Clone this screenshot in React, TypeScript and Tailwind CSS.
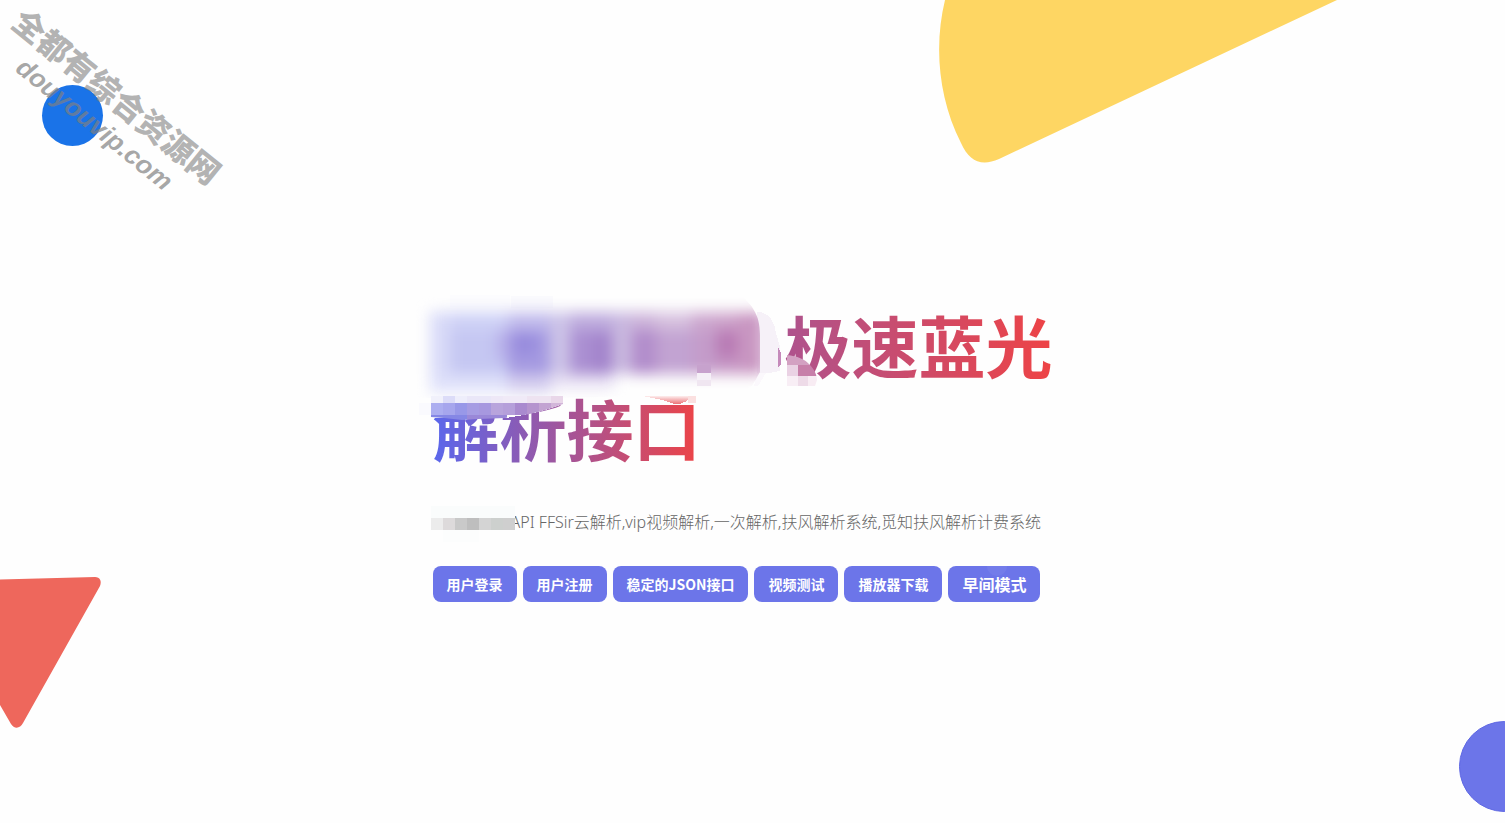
import React from 'react';

const links = [
  { label: '用户登录', href: '#login' },
  { label: '用户注册', href: '#register' },
  { label: '稳定的JSON接口', href: '#api' },
  { label: '视频测试', href: '#test' },
  { label: '播放器下载', href: '#download' },
];

// [x, y, width, height, fill]
type Cell = [number, number, number, number, string];

const softCells: Cell[] = [
  [430, 312, 22, 62, '#d9dbf8'],
  [450, 312, 60, 20, '#cfd2f6'],
  [450, 330, 60, 44, '#c5c7f2'],
  [496, 330, 14, 30, '#b9b2ea'],
  [508, 312, 44, 20, '#c2bcec'],
  [508, 330, 44, 44, '#a59ae1'],
  [514, 334, 22, 20, '#978bdd'],
  [550, 312, 22, 62, '#cdc4e8'],
  [570, 312, 44, 20, '#bfadde'],
  [570, 330, 44, 44, '#ab90d2'],
  [592, 334, 22, 38, '#a384cc'],
  [612, 312, 22, 62, '#c9b8df'],
  [632, 312, 26, 20, '#cdb4da'],
  [632, 330, 26, 44, '#b28dcb'],
  [656, 312, 38, 20, '#d6c0de'],
  [656, 330, 38, 44, '#c2a3d2'],
  [692, 312, 26, 20, '#cda8cf'],
  [692, 330, 26, 44, '#c49cca'],
  [716, 312, 24, 20, '#cda3ca'],
  [716, 330, 24, 30, '#b97bb5'],
  [716, 358, 24, 16, '#c799c6'],
  [738, 312, 26, 62, '#c997c2'],
  [430, 374, 80, 18, '#dfe1fa'],
  [508, 374, 44, 18, '#d3ccee'],
  [550, 374, 64, 14, '#e7e0f3'],
];

const hardCells: Cell[] = [
  [697, 365, 14, 8, '#c7a2cd'],
  [697, 373, 14, 7, '#f5f0f7'],
  [697, 380, 14, 6, '#f0e6f1'],
  [419, 403, 12, 12, '#fafafe'],
  [431, 396, 12, 7, '#f1f1fb'],
  [443, 396, 12, 7, '#dcdcf8'],
  [455, 396, 12, 7, '#eeeefb'],
  [467, 396, 24, 7, '#eae7f8'],
  [491, 396, 12, 7, '#eee8f7'],
  [503, 396, 24, 7, '#f0eaf7'],
  [527, 396, 24, 7, '#eee3f1'],
  [551, 396, 12, 7, '#e9d7e9'],
];

const stripColors = [
  '#acaef0', '#a6a6ed', '#9898e8', '#a69ce3', '#a798df', '#b8a4dc',
  '#b59fda', '#a98acf', '#b594ce', '#c3a3d2', '#d2b6d9',
];

const noteColors = ['#ececec', '#dddadb', '#c9c9c9', '#bebebe', '#d4d4d4', '#cdd0ce', '#cfcfcf'];

function Cells({ cells }: { cells: Cell[] }) {
  return (
    <>
      {cells.map(([x, y, w, h, fill]) => (
        <rect key={`${x}-${y}`} x={x} y={y} width={w} height={h} fill={fill} />
      ))}
    </>
  );
}

// Censored brand name over the heading
function TitleMask() {
  return (
    <svg
      className="pointer-events-none absolute -left-[25px] -top-3 h-[140px] w-[420px]"
      viewBox="408 290 420 140"
      shapeRendering="crispEdges"
      aria-hidden="true"
    >
      <defs>
        <filter id="soft" x="-10%" y="-30%" width="120%" height="160%" colorInterpolationFilters="sRGB">
          <feGaussianBlur stdDeviation="7" />
        </filter>
        <linearGradient id="blush" x1="0" y1="0" x2="0" y2="1">
          <stop offset="0" stopColor="#fdeeee" />
          <stop offset="1" stopColor="#ec7377" />
        </linearGradient>
        <clipPath id="block">
          <path d="M408 290H735C752 304 760 314 760 335V372L752 386L735 396H640L560 398H408Z" />
        </clipPath>
        <clipPath id="strip">
          <path d="M431 403H563V404C545 411 528 415 505 418L478 419L462 420L444 418L431 417Z" />
        </clipPath>
        <clipPath id="edge">
          <path d="M787 355C797 356 805 359 810 365C815 370 817 376 817 380L815 386H787Z" />
        </clipPath>
      </defs>

      <rect x={450} y={295} width={60} height={12} fill="#fcfcfe" />
      <rect x={511} y={296} width={42} height={12} fill="#fafafd" />
      <path d="M757 312C768 312 774 319 776 333L780 347V371L769 373H757Z" fill="#f6f1f8" />
      <path d="M757 373H766L758 386H754Z" fill="#fbf8fc" />
      <path d="M778 347L781 353V364L778 367Z" fill="#c58abb" />
      <g clipPath="url(#block)">
        <g filter="url(#soft)">
          <Cells cells={softCells} />
        </g>
      </g>

      <Cells cells={hardCells} />

      <path d="M431 403H563V404C545 411 528 415 505 418L431 418Z" fill="#fefefe" />
      <g clipPath="url(#strip)">
        {stripColors.map((fill, i) => (
          <rect key={i} x={431 + i * 12} y={403} width={12} height={12} fill={fill} />
        ))}
        <rect x={431} y={415} width={36} height={5} fill="#8587e5" />
        <rect x={467} y={415} width={40} height={5} fill="#9a88d8" />
      </g>
      <path d="M643 396H689L687 401L680 404H674L662 400Z" fill="url(#blush)" />
      <rect x={688} y={396} width={8} height={7} fill="#fbe0e0" />

      <g clipPath="url(#edge)">
        <rect x={787} y={355} width={30} height={10} fill="#d3a1c2" />
        <rect x={787} y={365} width={11} height={11} fill="#ead2e4" />
        <rect x={798} y={365} width={19} height={11} fill="#c77fa9" />
        <rect x={787} y={376} width={11} height={10} fill="#f8eef5" />
        <rect x={798} y={376} width={10} height={10} fill="#eedbe8" />
        <rect x={808} y={376} width={9} height={10} fill="#f8ecf3" />
      </g>
    </svg>
  );
}

function Shapes() {
  return (
    <div aria-hidden="true">
      <svg className="absolute left-[62.4%] top-0 h-[164px] w-[400px]" viewBox="0 0 400 164">
        <path d="M6 0C-5 45 -1 98 22 143C30 161 42 167 60 159L398 0Z" fill="#fed663" />
      </svg>
      <div className="absolute left-[42px] top-[85px] size-[61px] rounded-full bg-[#1a73e8]" />
      <svg className="absolute left-0 top-[576px] h-[154px] w-[102px]" viewBox="0 0 102 154">
        <path d="M0 3.5L95 1C100 1 102 5 100 10L23 147C20 153 14 153 11 148L0 129Z" fill="#ee675c" />
      </svg>
      <div className="absolute -right-[45px] bottom-[11px] size-[91px] rounded-full border border-[#5f68e4] bg-[#6c75e9]" />
    </div>
  );
}

export default function App() {
  return (
    <main className="relative flex min-h-screen justify-center overflow-hidden bg-[#fefefe] px-4 font-['Noto_Sans','Noto_Sans_CJK_SC',sans-serif]">
      <Shapes />

      <div className="pointer-events-none absolute -left-5 top-[76px] flex w-[252px] rotate-39 flex-col items-center whitespace-nowrap font-['Liberation_Sans','Noto_Sans_CJK_SC',sans-serif] font-bold">
        <p className="text-[32px] leading-9 font-black text-[#808080]/60">全都有综合资源网</p>
        <p className="text-[26px] leading-8 italic text-[#808080]/70">douyouvip.com</p>
      </div>

      <section className="relative flex w-full max-w-[640px] flex-col pt-[302px]">
        <div className="relative">
          <h1 className="text-[67px] leading-[83px] font-bold font-['Noto_Sans_CJK_SC',sans-serif]">
            <span className="box-decoration-clone bg-linear-to-r/srgb from-[#5a67ec] to-[#ee4345] bg-clip-text text-transparent">
              <span className="inline-block w-[352px]" />
              极速蓝光
              <br />
              解析接口
            </span>
          </h1>
          <TitleMask />
        </div>

        <p className="mt-[42px] text-base leading-6 font-light text-[#666666]">
          <svg className="relative inline-block h-3 w-[78px] overflow-visible align-middle" viewBox="0 0 78 12" aria-hidden="true">
            <rect x={-2} y={-12} width={84} height={12} fill="#fafcfc" />
            {noteColors.map((fill, i) => (
              <rect key={i} x={-2 + i * 12} y={0} width={12} height={12} fill={fill} />
            ))}
            <rect x={10} y={12} width={36} height={12} fill="#fcfdfd" />
          </svg>
          API FFSir云解析,vip视频解析,一次解析,扶风解析系统,觅知扶风解析计费系统
        </p>

        <nav className="mt-8 flex flex-wrap gap-1.5 font-bold text-white font-['Noto_Sans_CJK_SC',sans-serif]">
          {links.map((link) => (
            <a
              key={link.href}
              href={link.href}
              className="flex h-9 items-center rounded-lg bg-[#6c75e9] px-3.5 text-sm"
            >
              {link.label}
            </a>
          ))}
          <button
            type="button"
            className="relative flex h-9 items-center overflow-hidden rounded-lg bg-[#6c75e9] px-3.5 text-base"
          >
            <span className="absolute -top-2.5 left-[39px] size-5 rounded-full bg-white/5" />
            早间模式
          </button>
        </nav>
      </section>
    </main>
  );
}
